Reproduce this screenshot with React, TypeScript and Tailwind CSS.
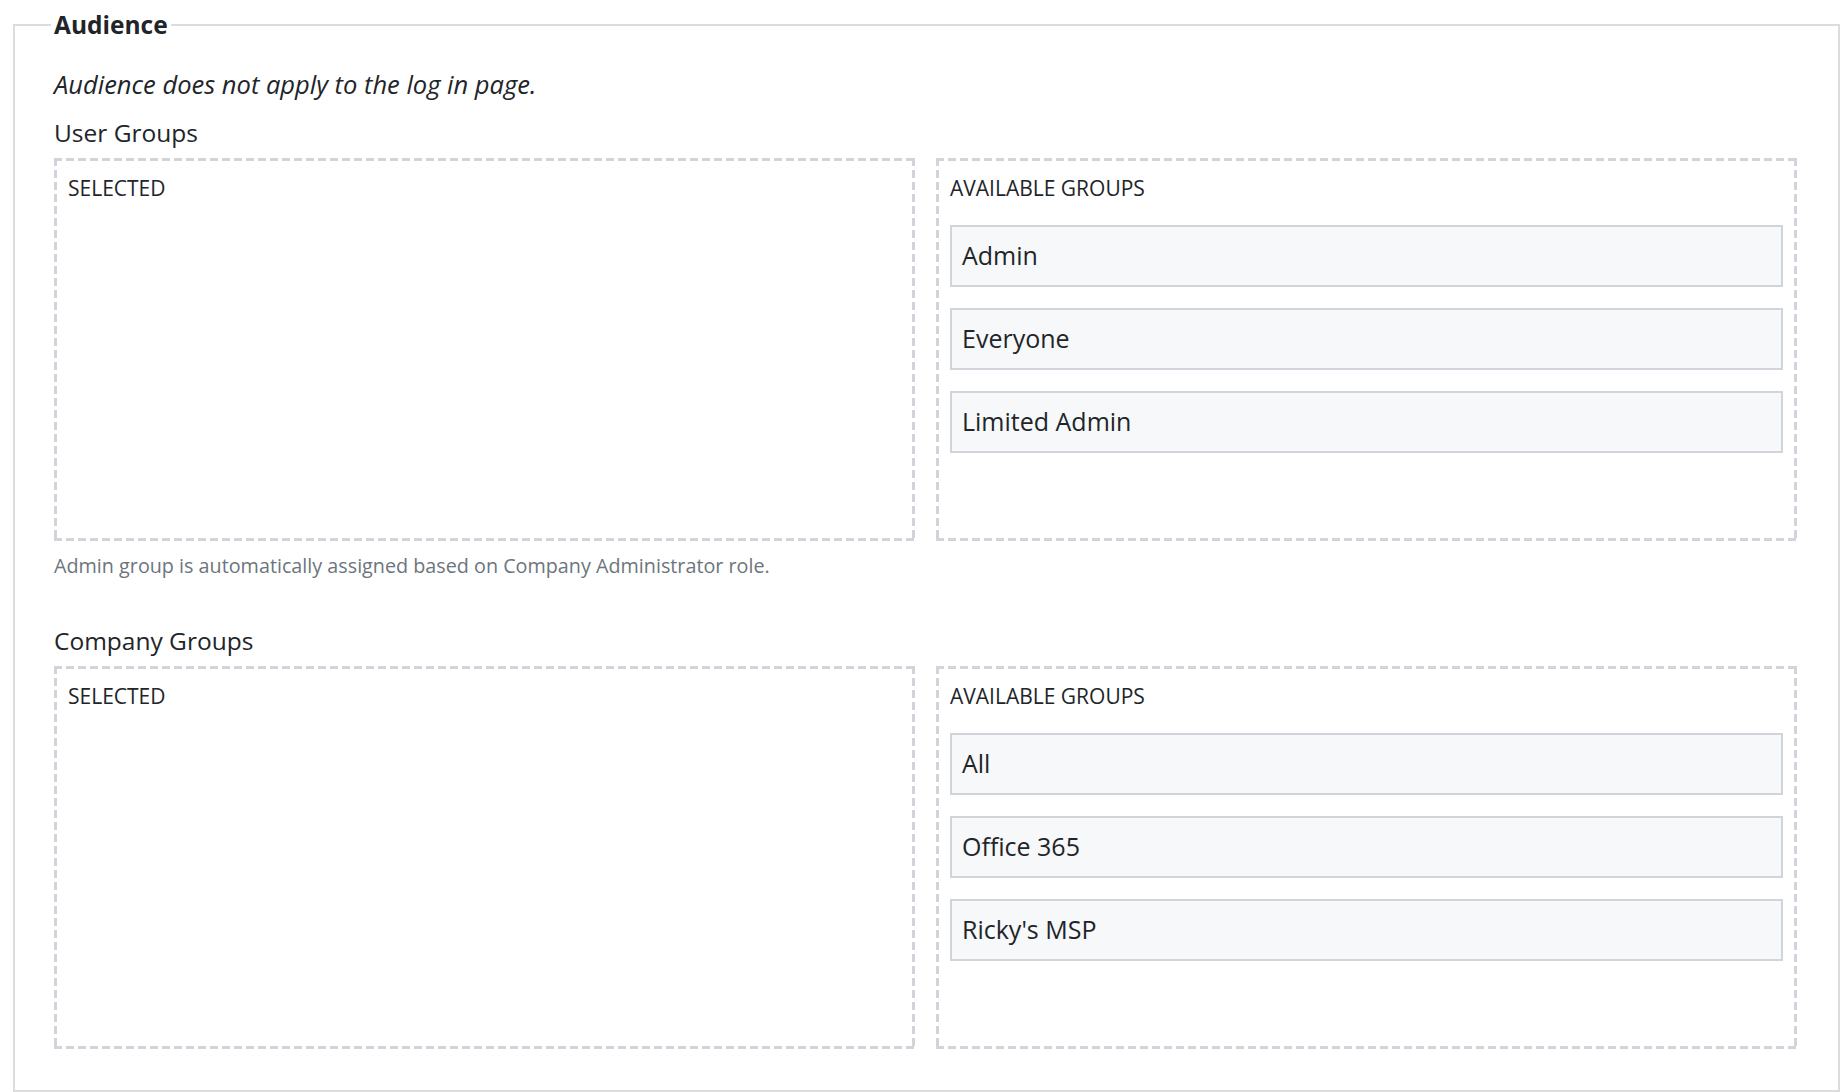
import React from "react";

const userGroups = ["Admin", "Everyone", "Limited Admin"];
const companyGroups = ["All", "Office 365", "Ricky's MSP"];

// dashed frame drawn with gradients so the dash/gap matches (8px dash, 4px gap, 3px thick)
const dashed =
  "[background-image:linear-gradient(to_right,#d1d5db_8px,transparent_8px),linear-gradient(to_right,#d1d5db_8px,transparent_8px),linear-gradient(to_bottom,#d1d5db_8px,transparent_8px),linear-gradient(to_bottom,#d1d5db_8px,transparent_8px)] [background-size:12px_3px,12px_3px,3px_12px,3px_12px] [background-position:0_0,0_100%,0_0,100%_0] [background-repeat:repeat-x,repeat-x,repeat-y,repeat-y]";

function GroupBox({ label, items }: { label: string; items: string[] }) {
  return (
    <div className={`h-[383px] pt-[16px] px-[14px] ${dashed}`}>
      <div className="text-[21px] leading-[28px] text-[#212529]">{label}</div>
      {items.length > 0 && (
        <div className="mt-[23px] flex flex-col gap-[21px]">
          {items.map((g) => (
            <div
              key={g}
              className="h-[62px] flex items-center border-2 border-[#d1d5db] bg-[#f7f8fa] pl-[10px] text-[25px] text-[#212529]"
            >
              {g}
            </div>
          ))}
        </div>
      )}
    </div>
  );
}

function GroupPicker({ title, available }: { title: string; available: string[] }) {
  return (
    <div>
      <h3 className="text-[24.5px] leading-[32px] text-[#212529]">{title}</h3>
      <div className="mt-[9px] grid grid-cols-2 gap-[21px]">
        <GroupBox label="SELECTED" items={[]} />
        <GroupBox label="AVAILABLE GROUPS" items={available} />
      </div>
    </div>
  );
}

export default function App() {
  return (
    <div
      className="min-h-screen bg-white pt-[9px] pl-[13px] pr-[8px]"
      style={{ fontFamily: '"Open Sans", "Noto Sans", sans-serif' }}
    >
      <fieldset className="border-2 border-[#dcdcdc] pl-[39px] pr-[41px] pb-[41px]">
        <legend className="-ml-[3px] px-[3px] text-[24.5px] leading-[32px] font-bold text-[#212529]">
          Audience
        </legend>
        <p className="mt-[28px] text-[25.5px] leading-[30px] italic text-[#212529]">
          Audience does not apply to the log in page.
        </p>
        <div className="mt-[18px]">
          <GroupPicker title="User Groups" available={userGroups} />
          <p className="mt-[12px] text-[19.75px] leading-[26px] text-[#6c757d]">
            Admin group is automatically assigned based on Company Administrator role.
          </p>
        </div>
        <div className="mt-[46px]">
          <GroupPicker title="Company Groups" available={companyGroups} />
        </div>
      </fieldset>
    </div>
  );
}
